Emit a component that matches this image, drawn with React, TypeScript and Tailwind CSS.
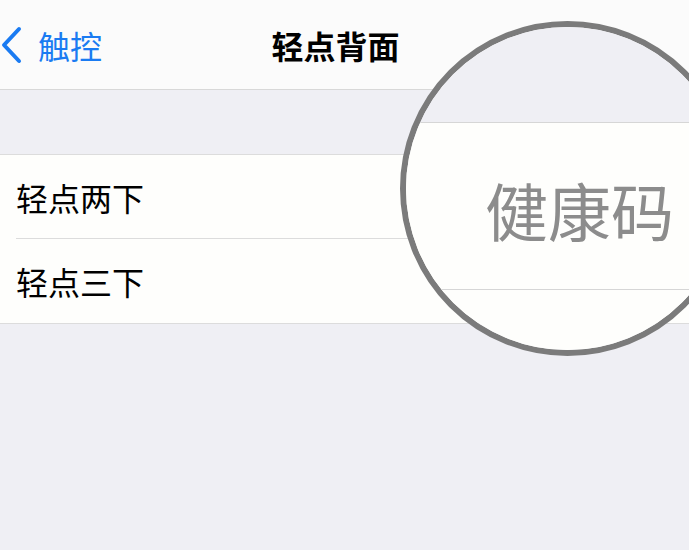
import React from 'react';

const font = { fontFamily: '"Noto Sans CJK SC", "Noto Sans", sans-serif' };

const Row = ({ label, last }: { label: string; last?: boolean }) => (
  <div className="h-[84px] bg-[#fefefc] pl-4 flex flex-col">
    <div className="flex-1 flex items-center text-[32px] text-black leading-none">
      {label}
    </div>
    {!last && <div className="h-px bg-[#dcdcdc]" />}
  </div>
);

const Magnifier = () => (
  <div className="absolute left-[400px] top-[21px] w-[335px] h-[335px] rounded-full border-[6px] border-[#7b7b7b] overflow-hidden flex flex-col">
    <div className="h-[96px] bg-[#efeff4] border-b border-[#d6d6d6]" />
    <div className="h-[167px] bg-[#fefefc] border-b border-[#d6d6d6] flex items-center pl-[79px]">
      <span className="text-[63px] leading-none text-[#8c8c8c] mt-[4px]">
        健康码
      </span>
    </div>
    <div className="flex-1 bg-[#fefefc]" />
  </div>
);

export default function App() {
  return (
    <div className="relative w-[689px] h-[550px] overflow-hidden bg-[#efeff4]" style={font}>
      {/* Navigation bar */}
      <div className="h-[90px] bg-[#fbfbfb] border-b border-[#d8d8d8] flex items-center relative">
        <div className="flex items-center pl-[1px] gap-[16px] text-[#1a7bf2]">
          <svg width="21" height="38" viewBox="0 0 21 38" fill="none">
            <polyline
              points="18,3 3,19 18,35"
              stroke="#1a7bf2"
              strokeWidth="4"
              strokeLinecap="round"
              strokeLinejoin="round"
            />
          </svg>
          <span className="text-[32px] leading-none">触控</span>
        </div>
        <div className="absolute left-0 right-0 flex justify-center pr-[18px]">
          <span className="text-[32px] leading-none font-bold text-black">轻点背面</span>
        </div>
      </div>

      {/* Spacer */}
      <div className="h-[64px]" />

      {/* Group */}
      <div className="border-t border-b border-[#dcdcdc]">
        <Row label="轻点两下" />
        <Row label="轻点三下" last />
      </div>

      <Magnifier />
    </div>
  );
}
